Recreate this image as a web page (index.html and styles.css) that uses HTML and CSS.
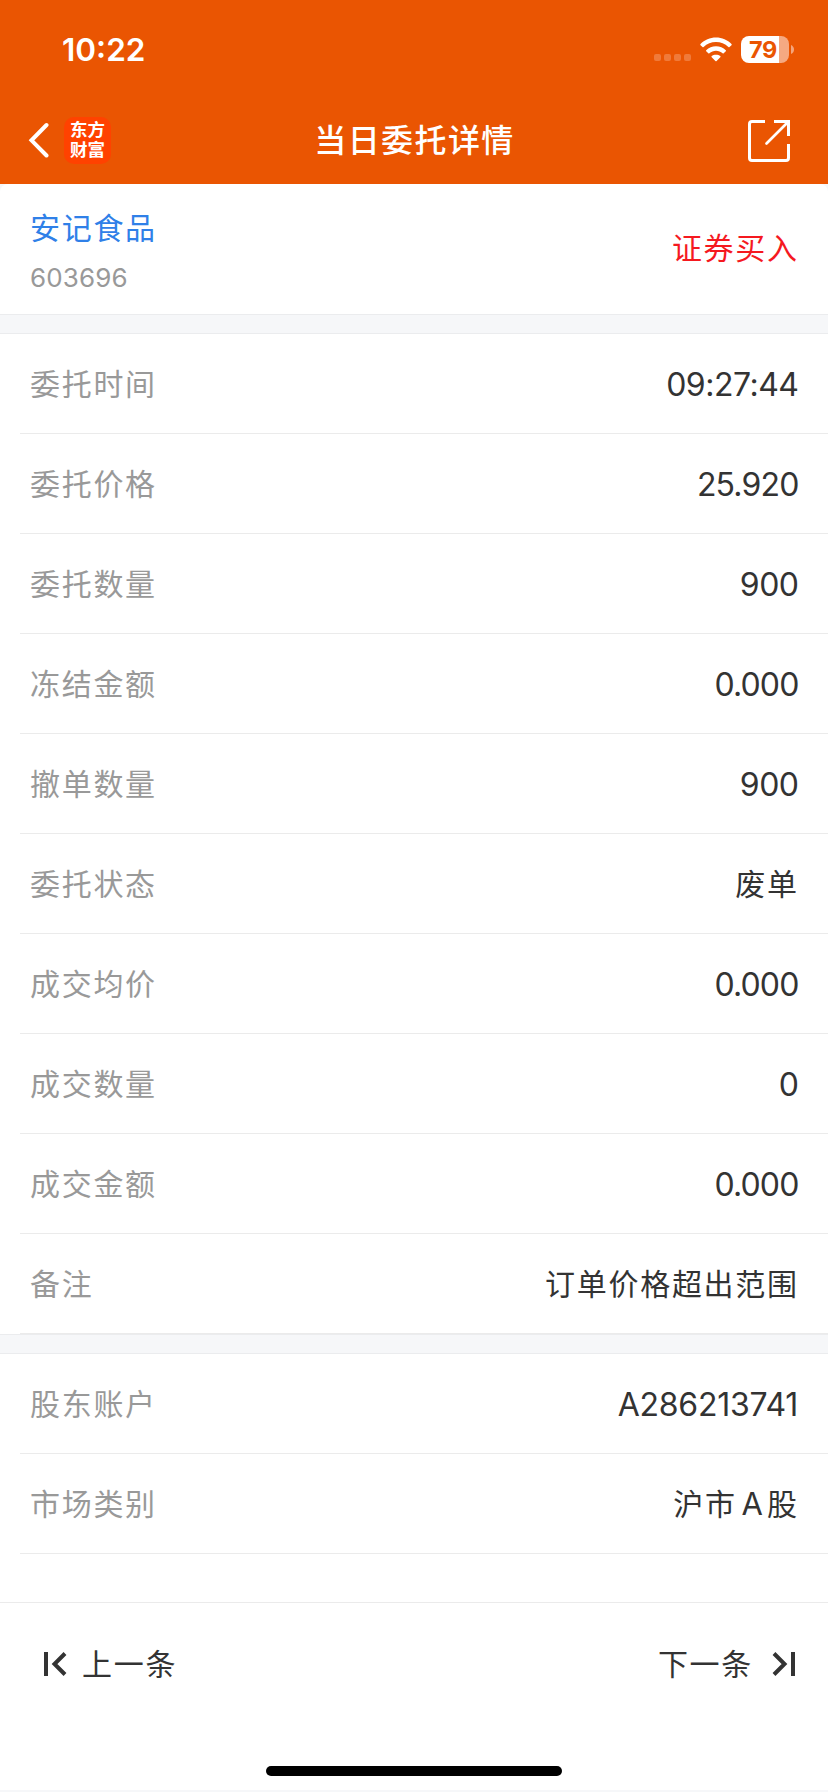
FILE: index.html
```html
<!DOCTYPE html>
<html lang="zh-CN">
<head>
<meta charset="utf-8">
<title>当日委托详情</title>
<link rel="stylesheet" href="styles.css">
</head>
<body>
<div class="screen">
  <header class="header">
    <div class="status">
      <span class="clock">10:22</span>
      <div class="indicators">
        <div class="dots"><i></i><i></i><i></i><i></i></div>
        <svg class="wifi" width="32" height="25" viewBox="0 0 32 25" fill="#fff">
          <path d="M16 .5C22 .5 27.600 3 31.500 7Q32 7.600 31.500 8.200L29.500 10.100Q29 10.500 28.400 10C25 6.700 20.700 5 16 5S7 6.700 3.600 10Q3 10.500 2.500 10.100L.500 8.200Q0 7.600.500 7C4.400 3 10 .5 16 .5Z"/>
          <path d="M16 9.300C19.800 9.300 23.200 10.700 25.800 13.200Q26.300 13.700 25.800 14.200L23.700 16.200Q23.200 16.700 22.600 16.200C20.800 14.600 18.500 13.700 16 13.700S11.200 14.600 9.400 16.200Q8.800 16.700 8.300 16.200L6.200 14.200Q5.700 13.700 6.200 13.200C8.800 10.700 12.200 9.300 16 9.300Z"/>
          <path d="M16 17.700C17.700 17.700 19.200 18.200 20.300 19.100Q20.900 19.700 20.300 20.300L16.600 23.900Q16 24.500 15.400 23.900L11.700 20.300Q11.100 19.700 11.700 19.100C12.800 18.200 14.300 17.700 16 17.700Z"/>
        </svg>
        <div class="battery"><span class="level">79</span></div>
        <svg class="nub" width="3" height="9" viewBox="0 0 3 9"><path d="M0 0Q3 1.500 3 4.500T0 9Z" fill="#f5a57c"/></svg>
      </div>
    </div>
    <nav class="navbar">
      <div class="nav-left">
        <svg width="22" height="36" viewBox="0 0 22 36" fill="none" stroke="#fff" stroke-width="4" stroke-linecap="round"><path d="M19.500 3L4.500 18.300L19.500 33.500"/></svg>
        <div class="logo"><span>东方</span><span>财富</span></div>
      </div>
      <h1 class="title">当日委托详情</h1>
      <svg class="share" width="42" height="42" viewBox="0 0 42 42" fill="none" stroke="#fff" stroke-width="3"><path d="M17 1.500H4Q1.500 1.500 1.500 4V38Q1.500 40.500 4 40.500H38Q40.500 40.500 40.500 38V24M26 1.500H40.500V16"/><path d="M39.500 2.500L18.500 23.500" stroke-width="2.700" stroke-linecap="round"/></svg>
    </nav>
  </header>

  <section class="stock">
    <div class="stock-id">
      <span class="stock-name">安记食品</span>
      <span class="stock-code">603696</span>
    </div>
    <span class="side">证券买入</span>
  </section>
  <div class="band"></div>
  <dl class="rows">
    <div class="row"><dt>委托时间</dt><dd class="num">09:27:44</dd></div>
    <div class="row"><dt>委托价格</dt><dd class="num decimal">25.920</dd></div>
    <div class="row"><dt>委托数量</dt><dd class="num">900</dd></div>
    <div class="row"><dt>冻结金额</dt><dd class="num decimal">0.000</dd></div>
    <div class="row"><dt>撤单数量</dt><dd class="num">900</dd></div>
    <div class="row"><dt>委托状态</dt><dd>废单</dd></div>
    <div class="row"><dt>成交均价</dt><dd class="num decimal">0.000</dd></div>
    <div class="row"><dt>成交数量</dt><dd class="num">0</dd></div>
    <div class="row"><dt>成交金额</dt><dd class="num decimal">0.000</dd></div>
    <div class="row"><dt>备注</dt><dd>订单价格超出范围</dd></div>
  </dl>
  <div class="band"></div>
  <dl class="rows grow">
    <div class="row"><dt>股东账户</dt><dd class="num account">A286213741</dd></div>
    <div class="row"><dt>市场类别</dt><dd>沪市<span class="latin">A</span>股</dd></div>
  </dl>
  <footer class="pager">
    <div class="page-link">
      <svg width="23" height="24" viewBox="0 0 23 24" fill="none" stroke="#333" stroke-width="4"><path d="M2 0V24M21 1.500L10.500 12L21 22.500"/></svg>
      <span class="page-text">上一条</span>
    </div>
    <div class="page-link next">
      <span class="page-text">下一条</span>
      <svg width="23" height="24" viewBox="0 0 23 24" fill="none" stroke="#333" stroke-width="4"><path d="M21 0V24M2 1.500L12.500 12L2 22.500"/></svg>
    </div>
  </footer>
  <div class="home"><div class="home-bar"></div></div>
</div>
</body>
</html>
```
FILE: styles.css
```css
* { box-sizing: border-box; }
body {
  margin: 0;
  background: #f6f7f9;
  color: #333;
  font-family: Inter, "Noto Sans CJK SC", sans-serif;
}
.screen {
  width: 828px;
  height: 1792px;
  display: flex;
  flex-direction: column;
}
.header { height: 184px; background: #ea5502; color: #fff; }
.status {
  height: 98px;
  padding: 0 34px 0 62px;
  display: flex;
  justify-content: space-between;
  align-items: center;
}
.clock { font-size: 31.500px; font-weight: 600; padding-top: 1px; }
.indicators { display: flex; align-items: center; }
.dots { display: flex; gap: 3px; margin: 17px 9px 0 0; }
.dots i { width: 7px; height: 7px; border-radius: 2px; background: #f07a3a; }
.wifi { margin-right: 9px; }
.battery {
  width: 48px;
  height: 27px;
  border-radius: 8px;
  background: linear-gradient(90deg, #fff 38px, #f5a982 38px);
  color: #ea5502;
  padding-left: 8px;
  margin-right: 2px;
  line-height: 28px;
}
.level { display: block; font-size: 23.500px; font-weight: 700; letter-spacing: -0.500px; }
.navbar {
  height: 86px;
  padding: 0 38px 0 27px;
  display: grid;
  grid-template-columns: 1fr auto 1fr;
  align-items: center;
}
.nav-left { display: flex; align-items: center; gap: 15px; margin-top: -2px; }
.logo {
  width: 47px;
  height: 47px;
  border-radius: 10px;
  background: #ff4200;
  display: flex;
  flex-direction: column;
  align-items: center;
  justify-content: center;
  padding-bottom: 2px;
  font: 700 17.500px/20px "Noto Sans CJK SC", sans-serif;
}
.title {
  margin: 0 -12px 0 0;
  padding-bottom: 6px;
  font: 500 32px/48px "Noto Sans CJK SC", sans-serif;
  letter-spacing: 1.400px;
}
.share { justify-self: end; }
.stock {
  height: 130px;
  padding: 0 31px 0 30px;
  background: #fff;
  border-radius: 8px 8px 0 0;
  display: flex;
  justify-content: space-between;
}
.stock-id { display: flex; flex-direction: column; padding-top: 20px; }
.stock-name { font: 30px/44px "Noto Sans CJK SC", sans-serif; letter-spacing: 1.700px; color: #2f80e8; }
.stock-code { font-size: 26px; line-height: 36px; margin-top: 12px; letter-spacing: 0.150px; color: #999; }
.side { font: 30px/44px "Noto Sans CJK SC", sans-serif; letter-spacing: 1.700px; margin: 40px -1.700px 0 0; color: #f5191f; }
.band {
  height: 20px;
  background: #f6f7f9;
  border-top: 1px solid #ebecee;
  border-bottom: 1px solid #ebecee;
}
.rows { margin: 0; padding-left: 20px; background: #fff; }
.grow { flex: 1; }
.row {
  height: 100px;
  padding: 0 31px 0 10px;
  border-bottom: 1px solid #ebebeb;
  display: flex;
  justify-content: space-between;
  align-items: center;
}
dt, dd {
  margin: 0;
  padding-bottom: 3px;
  font: 30px/44px "Noto Sans CJK SC", sans-serif;
  letter-spacing: 1.700px;
}
dt { color: #999; }
dd { margin-right: -1.700px; }
dd.num {
  padding: 3px 0 0;
  font: 32px/44px Inter, sans-serif;
  margin-right: -1.500px;
  letter-spacing: -0.500px;
}
dd.decimal { letter-spacing: -0.850px; }
dd.account { letter-spacing: -0.250px; margin-right: -1px; }
.latin { font: 31px/40px Inter, sans-serif; margin: 0 4px 0 5px; letter-spacing: 0; }
.pager {
  height: 126px;
  padding: 0 33px 4px 44px;
  border-top: 1px solid #ebebeb;
  background: #fff;
  display: flex;
  align-items: center;
  justify-content: space-between;
  font: 30px/44px "Noto Sans CJK SC", sans-serif;
  letter-spacing: 1.700px;
}
.page-link { display: flex; align-items: center; gap: 15px; }
.page-text { padding-bottom: 4px; }
.next { gap: 19px; }
.home {
  height: 62px;
  background: #fff;
  display: flex;
  justify-content: center;
  align-items: flex-end;
  padding-bottom: 14px;
  margin-bottom: 2px;
}
.home-bar { width: 296px; height: 10px; border-radius: 5px; background: #000; }
```
